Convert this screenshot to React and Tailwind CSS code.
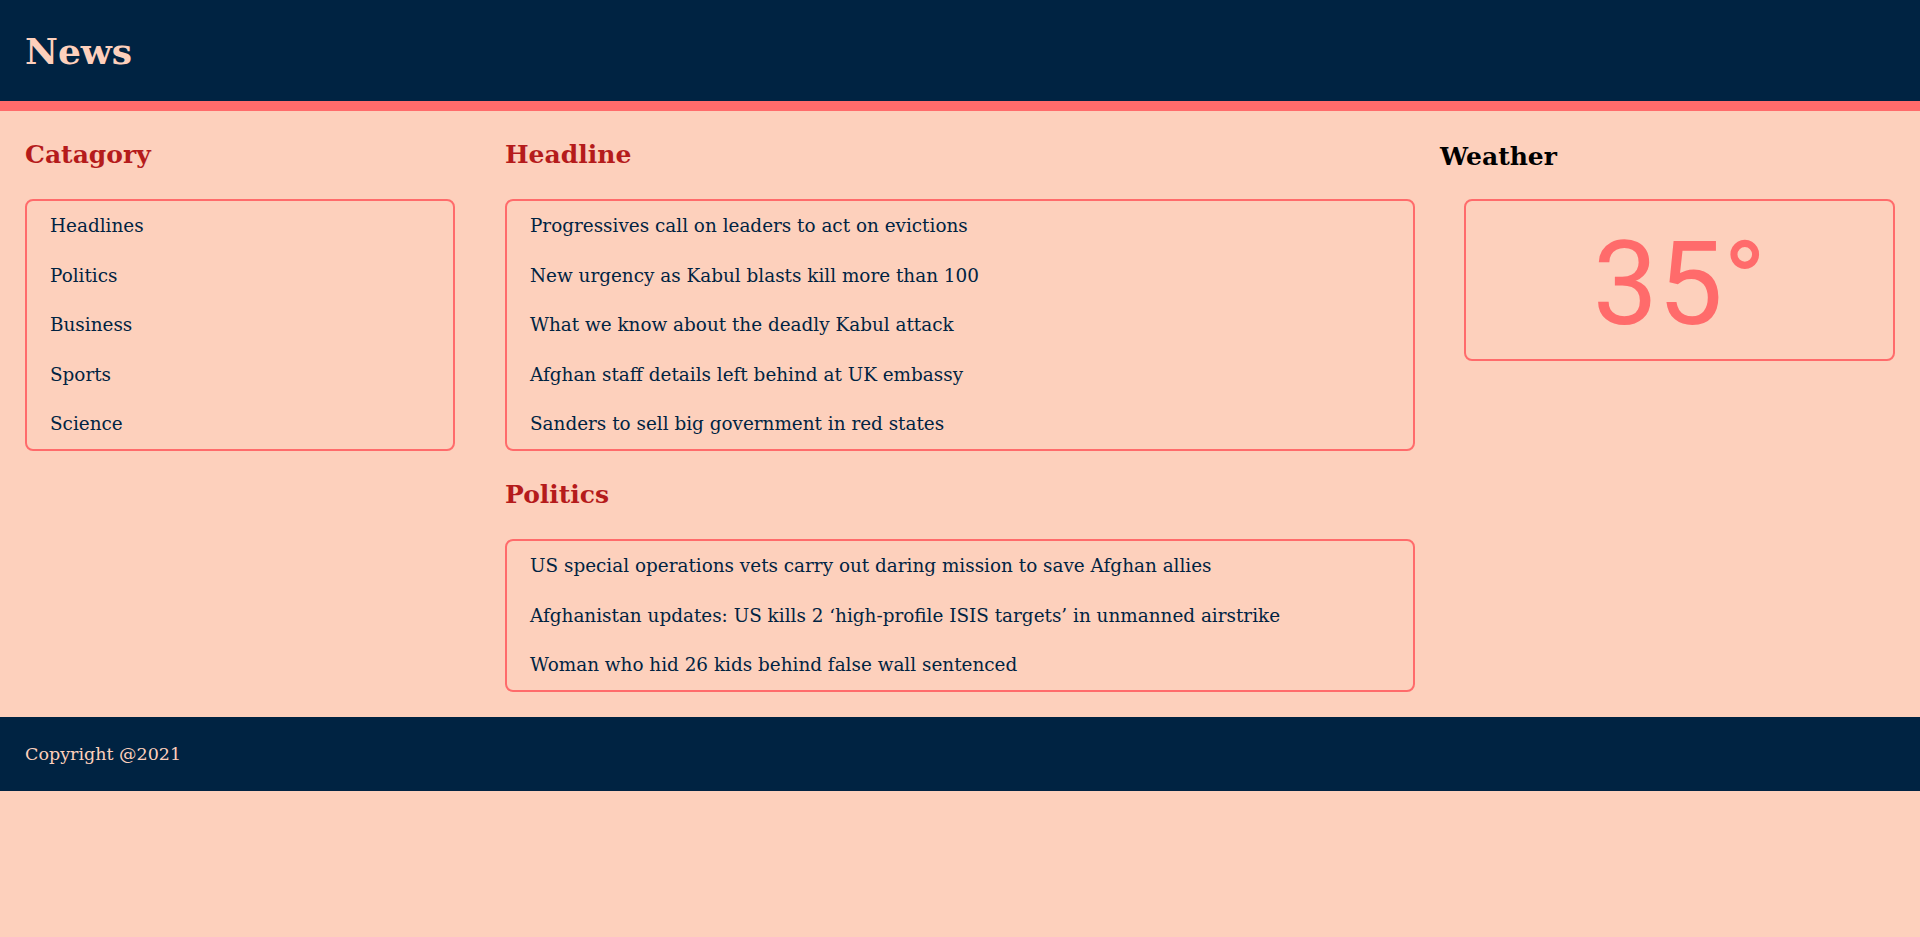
import React from "react";

const serif = { fontFamily: '"DejaVu Serif", "Liberation Serif", serif' };

function Box({ items }) {
  return (
    <ul className="border-2 border-[#ff6b6b] rounded-lg">
      {items.map((t) => (
        <li
          key={t}
          className="h-[49.6px] flex items-center pl-[23px] text-[18.4px] text-[#002342] whitespace-nowrap"
        >
          {t}
        </li>
      ))}
    </ul>
  );
}

function Heading({ children, className = "" }) {
  return (
    <h2
      className={`h-[88px] flex items-center text-[25px] font-bold ${className}`}
    >
      {children}
    </h2>
  );
}

export default function App() {
  return (
    <div className="min-h-[937px] bg-[#fdd0bc]" style={serif}>
      <header className="h-[111px] bg-[#002342] border-b-[10px] border-[#ff6b6b] flex items-center px-[25px]">
        <h1 className="text-[36px] font-bold text-[#fdd0bc]">News</h1>
      </header>
      <main className="flex pb-[25px]">
        <aside className="w-1/4 px-[25px]">
          <Heading className="text-[#b51b1b]">Catagory</Heading>
          <Box items={["Headlines", "Politics", "Business", "Sports", "Science"]} />
        </aside>
        <section className="w-1/2 px-[25px]">
          <Heading className="text-[#b51b1b]">Headline</Heading>
          <Box
            items={[
              "Progressives call on leaders to act on evictions",
              "New urgency as Kabul blasts kill more than 100",
              "What we know about the deadly Kabul attack",
              "Afghan staff details left behind at UK embassy",
              "Sanders to sell big government in red states",
            ]}
          />
          <Heading className="text-[#b51b1b]">Politics</Heading>
          <Box
            items={[
              "US special operations vets carry out daring mission to save Afghan allies",
              "Afghanistan updates: US kills 2 \u2018high-profile ISIS targets\u2019 in unmanned airstrike",
              "Woman who hid 26 kids behind false wall sentenced",
            ]}
          />
        </section>
        <aside className="w-1/4">
          <Heading className="text-black pt-[4px]">Weather</Heading>
          <div className="ml-[24px] mr-[25px] h-[162px] border-2 border-[#ff6b6b] rounded-lg flex items-center justify-center">
            <span
              className="text-[116px] leading-none text-[#ff6b6b] pt-[8px]"
              style={{ fontFamily: "Roboto, sans-serif" }}
            >
              35°
            </span>
          </div>
        </aside>
      </main>
      <footer className="h-[74px] bg-[#002342] flex items-center px-[25px]">
        <p className="text-[17.5px] text-[#fdd0bc]">Copyright @2021</p>
      </footer>
    </div>
  );
}
